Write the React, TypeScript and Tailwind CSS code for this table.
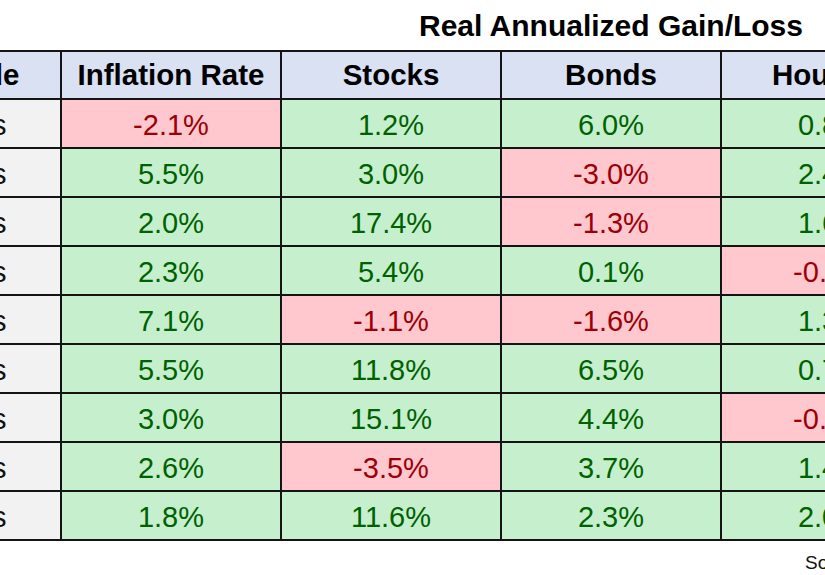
import React from "react";

type Cell = { v: string; neg: boolean };

const rows: { decade: string; cells: Cell[] }[] = [
  { decade: "1930s", cells: [{ v: "-2.1%", neg: true }, { v: "1.2%", neg: false }, { v: "6.0%", neg: false }, { v: "0.8%", neg: false }] },
  { decade: "1940s", cells: [{ v: "5.5%", neg: false }, { v: "3.0%", neg: false }, { v: "-3.0%", neg: true }, { v: "2.4%", neg: false }] },
  { decade: "1950s", cells: [{ v: "2.0%", neg: false }, { v: "17.4%", neg: false }, { v: "-1.3%", neg: true }, { v: "1.6%", neg: false }] },
  { decade: "1960s", cells: [{ v: "2.3%", neg: false }, { v: "5.4%", neg: false }, { v: "0.1%", neg: false }, { v: "-0.2%", neg: true }] },
  { decade: "1970s", cells: [{ v: "7.1%", neg: false }, { v: "-1.1%", neg: true }, { v: "-1.6%", neg: true }, { v: "1.3%", neg: false }] },
  { decade: "1980s", cells: [{ v: "5.5%", neg: false }, { v: "11.8%", neg: false }, { v: "6.5%", neg: false }, { v: "0.7%", neg: false }] },
  { decade: "1990s", cells: [{ v: "3.0%", neg: false }, { v: "15.1%", neg: false }, { v: "4.4%", neg: false }, { v: "-0.3%", neg: true }] },
  { decade: "2000s", cells: [{ v: "2.6%", neg: false }, { v: "-3.5%", neg: true }, { v: "3.7%", neg: false }, { v: "1.4%", neg: false }] },
  { decade: "2010s", cells: [{ v: "1.8%", neg: false }, { v: "11.6%", neg: false }, { v: "2.3%", neg: false }, { v: "2.0%", neg: false }] },
];

const headers = ["Decade", "Inflation Rate", "Stocks", "Bonds", "Housing"];

export default function App() {
  return (
    <div
      className="w-[825px] h-[575px] overflow-hidden bg-white relative"
      style={{ fontFamily: '"Liberation Sans", Arial, sans-serif' }}
    >
      <div className="ml-[-128px] w-[1100px]">
        {/* title row */}
        <div className="grid grid-cols-[186px_218px_218px_218px_218px] gap-x-[2px] px-[2px] h-[50px] items-center">
          <div className="col-start-3 col-span-3 text-center text-[30px] font-bold text-black leading-none pt-[2px]">
            Real Annualized Gain/Loss
          </div>
        </div>
        {/* table */}
        <div className="w-fit grid grid-cols-[186px_218px_218px_218px_218px] grid-rows-[46px_repeat(9,47px)] gap-[2px] p-[2px] bg-[#141414]">
          {headers.map((h) => (
            <div
              key={h}
              className="bg-[#D9E1F2] flex items-center justify-center text-[29.5px] font-bold text-black leading-none"
            >
              {h}
            </div>
          ))}
          {rows.map((r) => (
            <React.Fragment key={r.decade}>
              <div className="bg-[#F2F2F2] flex items-center justify-center text-[29px] text-[#111] leading-none pt-[3px]">
                {r.decade}
              </div>
              {r.cells.map((c, i) => (
                <div
                  key={i}
                  className={
                    c.neg
                      ? "bg-[#FFC7CE] text-[#9C0006] flex items-center justify-center text-[29px] leading-none pt-[3px]"
                      : "bg-[#C6EFCE] text-[#006100] flex items-center justify-center text-[29px] leading-none pt-[3px]"
                  }
                >
                  {c.v}
                </div>
              ))}
            </React.Fragment>
          ))}
        </div>
        {/* source */}
        <div className="pl-[933px] pt-[12px] text-[19px] text-[#111] whitespace-nowrap leading-none">
          Sources: Shiller, Federal Reserve
        </div>
      </div>
    </div>
  );
}
